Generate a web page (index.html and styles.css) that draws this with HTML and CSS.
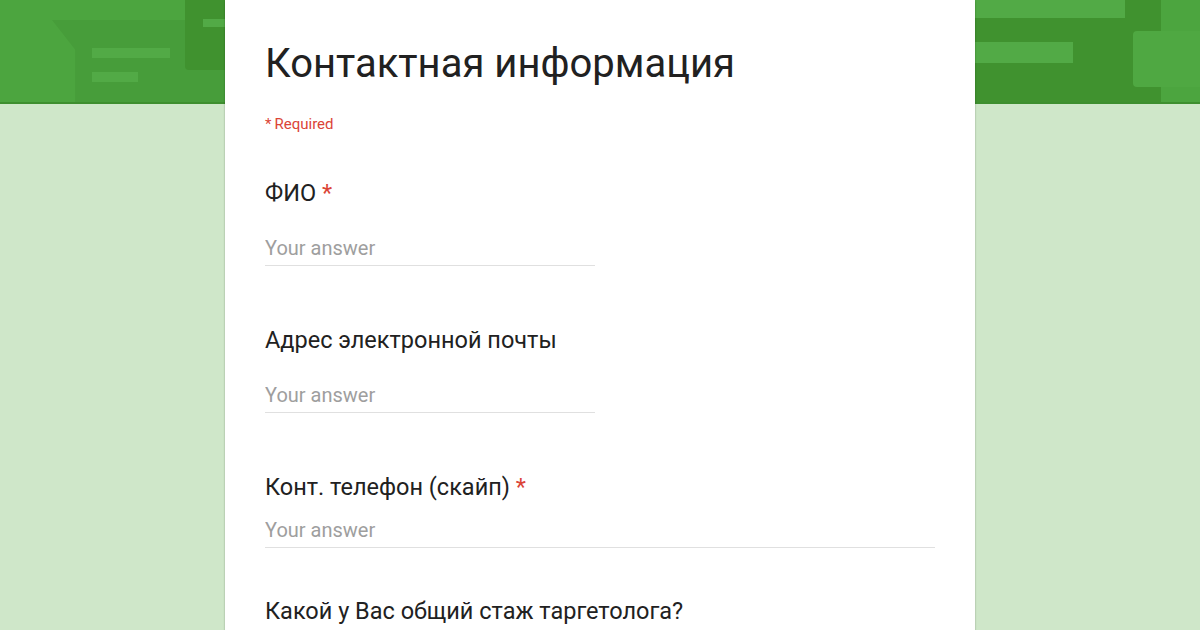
FILE: index.html
```html
<!DOCTYPE html>
<html lang="ru">
<head>
    <meta charset="UTF-8">
    <meta name="viewport" content="width=device-width, initial-scale=1.0">
    <link rel="stylesheet" href="styles.css">
    <title>Контактная информация</title>
</head>
<body>
    <div class="header">
        <!-- decorative shapes of the theme banner -->
        <div class="deco deco-left-slab"></div>
        <div class="deco deco-left-bar1"></div>
        <div class="deco deco-left-bar2"></div>
        <div class="deco deco-left-box"></div>
        <div class="deco deco-left-boxbar"></div>
        <div class="deco deco-right-slab"></div>
        <div class="deco deco-right-top"></div>
        <div class="deco deco-right-bar"></div>
        <div class="deco deco-right-box"></div>
    </div>

    <form class="card" id="contactForm">
        <h1 class="form-title">Контактная информация</h1>
        <div class="required-note">*&thinsp;Required</div>

        <div class="question question-first">
            <label for="fio" class="q-title">ФИО <span class="star">*</span></label>
            <input type="text" id="fio" class="answer" placeholder="Your answer" required>
        </div>

        <div class="question">
            <label for="email" class="q-title">Адрес электронной почты</label>
            <input type="email" id="email" class="answer" placeholder="Your answer">
        </div>

        <div class="question">
            <label for="phone" class="q-title">Конт. телефон (скайп) <span class="star">*</span></label>
            <input type="text" id="phone" class="answer answer-wide" placeholder="Your answer" required>
        </div>

        <div class="question question-last">
            <label class="q-title">Какой у Вас общий стаж таргетолога?</label>
        </div>
    </form>
</body>
</html>
```

FILE: styles.css
```css
body {
    margin: 0;
    background-color: #cfe7c9;
    font-family: Roboto, "Noto Sans", Arial, sans-serif;
    height: 630px;
    overflow: hidden;
}

.header {
    position: relative;
    height: 102px;
    background-color: #4ca53f;
    border-bottom: 2px solid #3e8f2f;
    overflow: hidden;
}

.deco {
    position: absolute;
}

.deco-left-slab {
    left: 52px;
    top: 20px;
    width: 178px;
    height: 82px;
    background-color: #479d3a;
    clip-path: polygon(0 0, 100% 0, 100% 100%, 13% 100%, 13% 36%);
}

.deco-left-bar1 {
    left: 92px;
    top: 48px;
    width: 78px;
    height: 10px;
    background-color: #52aa46;
}

.deco-left-bar2 {
    left: 92px;
    top: 72px;
    width: 46px;
    height: 10px;
    background-color: #52aa46;
}

.deco-left-box {
    left: 185px;
    top: -6px;
    width: 60px;
    height: 76px;
    border-radius: 4px;
    background-color: #40922f;
}

.deco-left-boxbar {
    left: 203px;
    top: 19px;
    width: 30px;
    height: 8px;
    background-color: #52aa46;
}

.deco-right-slab {
    left: 975px;
    top: 0;
    width: 186px;
    height: 102px;
    background-color: #40922f;
}

.deco-right-top {
    left: 975px;
    top: 0;
    width: 150px;
    height: 18px;
    background-color: #52aa46;
}

.deco-right-bar {
    left: 975px;
    top: 42px;
    width: 98px;
    height: 21px;
    background-color: #52aa46;
}

.deco-right-box {
    left: 1133px;
    top: 31px;
    width: 80px;
    height: 56px;
    border-radius: 4px;
    background-color: #4fa842;
}

.card {
    position: relative;
    width: 670px;
    margin: -104px auto 0;
    padding: 40px 40px 0;
    background-color: #fff;
    box-shadow: 0 0 2px rgba(0, 0, 0, 0.2), 0 2px 2px rgba(0, 0, 0, 0.1);
    min-height: 640px;
}

.form-title {
    margin: 0;
    font-size: 40px;
    font-weight: 400;
    line-height: 48px;
    color: #212121;
}

.required-note {
    margin-top: 27px;
    font-size: 15px;
    line-height: 18px;
    color: #db4437;
}

.question {
    margin-top: 60px;
}

.question-first {
    margin-top: 46px;
}

.question-last {
    margin-top: 49px;
}

.q-title {
    display: block;
    font-size: 23.5px;
    line-height: 28px;
    color: #212121;
}

.star {
    color: #db4437;
}

.answer {
    display: block;
    width: 330px;
    margin-top: 29px;
    padding: 0 0 5px;
    border: none;
    border-bottom: 1px solid #e0e0e0;
    font-family: Roboto, "Noto Sans", Arial, sans-serif;
    font-size: 20px;
    line-height: 24px;
    color: #212121;
    outline: none;
    background: transparent;
}

.answer::placeholder {
    color: #9e9e9e;
}

.answer-wide {
    width: 670px;
    margin-top: 17px;
}
```
